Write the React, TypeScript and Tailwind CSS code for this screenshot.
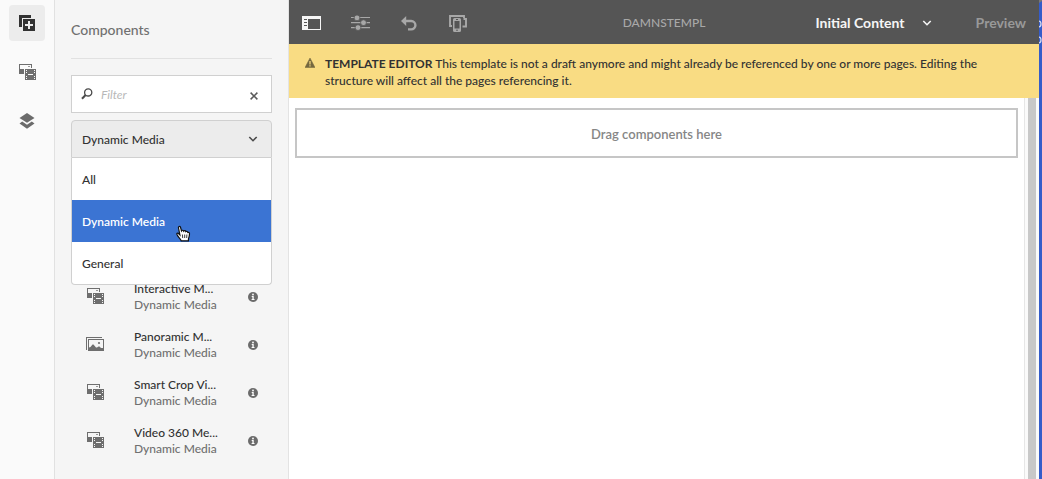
import React from 'react';

type IconProps = { className?: string };

function AddComponentIcon() {
  return (
    <svg className="h-4 w-4" viewBox="0 0 16 16" aria-hidden="true">
      <path fill="#323232" d="M0 0h12v3H3v9H0z" />
      <path fill="#323232" fillRule="evenodd" d="M4 4h12v12H4zM9 6v3H6v2h3v3h2v-3h3V9h-3V6z" />
    </svg>
  );
}

function MediaIcon({ className }: IconProps) {
  return (
    <svg className={className} viewBox="0 0 17 16" aria-hidden="true" shapeRendering="crispEdges">
      <path fill="currentColor" d="M0 0h13v4h-1V1H1v4h3l1 1v4H0z" />
      <path fill="currentColor" d="M9 2h2v1H9z" opacity=".7" />
      <path
        fill="currentColor"
        fillRule="evenodd"
        d="M6 5h11v11H6zM7 6v1h1V6zM7 8v1h1V8zM7 12v1h1v-1zM7 14v1h1v-1zM15 6v1h1V6zM15 8v1h1V8zM15 12v1h1v-1zM15 14v1h1v-1zM9 10v1h5v-1z"
      />
    </svg>
  );
}

function PanoramaIcon({ className }: IconProps) {
  return (
    <svg className={className} viewBox="0 0 18 15" aria-hidden="true">
      <path fill="currentColor" d="M0 0h16v1H1v12H0z" />
      <path
        fill="currentColor"
        fillRule="evenodd"
        d="M2 2h16v12H2zM3 3v7.500L4.500 10 6.500 7.500h1L10 10.500h1L12.500 9.500h1L15 11h2V3z"
      />
      <circle cx="13" cy="6" r="1.100" fill="currentColor" />
    </svg>
  );
}

function LayersIcon() {
  return (
    <svg className="h-4 w-4" viewBox="0 0 16 16" aria-hidden="true">
      <path fill="#6b6b6b" d="M8 0l7.500 4.900L8 9.800.5 4.900z" />
      <path fill="#6b6b6b" d="M3.200 8.600L8 11.800l4.800-3.200 2.700 2L8 15.800.5 10.600z" />
    </svg>
  );
}

function ChevronIcon({ className }: IconProps) {
  return (
    <svg className={className} viewBox="0 0 10 6" aria-hidden="true">
      <path d="M1.3 1L5 4.7 8.7 1" fill="none" stroke="currentColor" strokeWidth="1.6" />
    </svg>
  );
}

function InfoIcon() {
  return (
    <svg className="h-[10px] w-[10px]" viewBox="0 0 10 10" aria-hidden="true">
      <circle cx="5" cy="5" r="5" fill="#6b6b6b" />
      <circle cx="5" cy="2.5" r=".9" fill="#fff" />
      <path d="M3.7 4.1h2v3h.8v.9H3.6v-.9h.8V5h-.7z" fill="#fff" />
    </svg>
  );
}

function HandCursor({ className }: IconProps) {
  return (
    <svg className={className} viewBox="0 0 15 17" aria-hidden="true">
      <path
        d="M5.2 15.8c-.4-1.5-1.8-2.5-2.9-4.2C1.6 10.500.600 9.400.8 8.700c.3-.9 1.400-.8 2 .1l1.100 1.100L2.500 3C2.200 1.300 4 .8 4.500 2.300l1 3.600c.5-1 2-.8 2.200.2.6-.8 2-.5 2.100.5.800-.6 1.900-.1 2 .900.800-.3 1.700.2 1.700 1.200 0 2.500-.4 3.500-1 5l-.1 2.100z"
        fill="#fff"
        stroke="#111"
        strokeWidth="1.2"
      />
      <path d="M6.400 9.500l.3 3.500M8.700 9.500v3.500M10.900 9.500l-.2 3.500" stroke="#222" strokeWidth=".9" />
    </svg>
  );
}

const items = [
  { name: 'Interactive M...', panorama: false },
  { name: 'Panoramic M...', panorama: true },
  { name: 'Smart Crop Vi...', panorama: false },
  { name: 'Video 360 Me...', panorama: false },
];

const groups = ['All', 'Dynamic Media', 'General'];

function Rail() {
  return (
    <nav className="flex w-[55px] shrink-0 flex-col items-center gap-[13px] border-r border-[#e1e1e1] bg-[#fafafa] pt-[5px]">
      <button aria-label="Components" className="flex h-9 w-9 items-center justify-center rounded bg-[#ececec]">
        <AddComponentIcon />
      </button>
      <button aria-label="Assets" className="flex h-9 w-9 items-center justify-center">
        <MediaIcon className="h-4 w-[17px] text-[#6e6e6e]" />
      </button>
      <button aria-label="Content tree" className="flex h-9 w-9 items-center justify-center">
        <LayersIcon />
      </button>
    </nav>
  );
}

function ComponentPanel() {
  return (
    <aside className="flex w-[234px] shrink-0 flex-col border-r border-[#e3e3e3] bg-[#f5f5f5] px-4">
      <h2 className="flex h-[59px] items-center border-b border-[#e1e1e1] pt-[2px] text-sm font-medium text-[#707070]">
        Components
      </h2>
      <div className="mt-4 flex h-[38px] items-center border border-[#d0d0d0] bg-white px-[9px]">
        <svg className="h-3 w-3" viewBox="0 0 12 12" aria-hidden="true">
          <circle cx="7.200" cy="4.400" r="3.600" fill="none" stroke="#4b4b4b" strokeWidth="1.300" />
          <path d="M4.600 7L1 10.800" stroke="#4b4b4b" strokeWidth="2" />
        </svg>
        <input
          aria-label="Filter"
          placeholder="Filter"
          className="ml-2 w-0 flex-1 bg-transparent pt-[2px] text-xs outline-none placeholder:text-[#b8b8b8] placeholder:italic"
        />
        <button aria-label="Clear filter" className="flex h-4 w-4 items-center justify-center pt-1">
          <svg className="h-2 w-2" viewBox="0 0 8 8" aria-hidden="true">
            <path d="M.6.600l6.800 6.800M7.400.600L.6 7.400" stroke="#5a5a5a" strokeWidth="1.500" />
          </svg>
        </button>
      </div>
      <div className="relative mt-[7px]">
        <div className="relative">
          <select
            aria-label="Component group"
            defaultValue="Dynamic Media"
            className="block h-[38px] w-full appearance-none rounded-t border border-[#d0d0d0] bg-[#ececec] px-[10px] pt-[2px] text-xs font-medium text-[#323232] outline-none"
          >
            {groups.map((g) => (
              <option key={g}>{g}</option>
            ))}
          </select>
          <ChevronIcon className="pointer-events-none absolute top-4 right-[14px] h-[6px] w-[10px] text-[#4b4b4b]" />
        </div>
        <ul
          role="listbox"
          aria-label="Component groups"
          className="absolute top-full right-0 left-0 z-10 rounded-b border border-t-0 border-[#d0d0d0] bg-white text-xs font-medium text-[#323232]"
        >
          {groups.map((g) =>
            g === 'Dynamic Media' ? (
              <li
                key={g}
                role="option"
                aria-selected="true"
                className="relative flex h-[42px] items-center bg-[#3b74d3] px-[10px] pt-[2px] font-semibold text-white"
              >
                {g}
                <HandCursor className="absolute top-[25px] left-[104px] h-[17px] w-[15px]" />
              </li>
            ) : (
              <li key={g} role="option" aria-selected="false" className="flex h-[42px] items-center px-[10px] pt-[2px]">
                {g}
              </li>
            ),
          )}
        </ul>
      </div>
      <ul className="mt-[115px]">
        {items.map((item) => (
          <li key={item.name} className="flex h-12 items-center pr-[14px]">
            <span className="flex w-[63px] shrink-0 pb-[2px] pl-[15px]">
              {item.panorama ? (
                <PanoramaIcon className="h-[15px] w-[18px] text-[#6e6e6e]" />
              ) : (
                <MediaIcon className="ml-px h-4 w-[17px] text-[#6e6e6e]" />
              )}
            </span>
            <span className="flex flex-1 flex-col text-xs leading-4 font-medium whitespace-nowrap">
              <span className="text-[#323232]">{item.name}</span>
              <span className="text-[#707070]">Dynamic Media</span>
            </span>
            <button aria-label={`About ${item.name}`}>
              <InfoIcon />
            </button>
          </li>
        ))}
      </ul>
    </aside>
  );
}

function Toolbar() {
  return (
    <header className="flex h-11 items-center bg-[#555555] pt-[2px] pr-[13px] pl-[13px] text-sm">
      <div className="flex flex-1 items-center text-[#a8a8a8]">
        <button aria-label="Toggle side panel" className="w-[49px]">
          <svg className="h-[14px] w-[19px]" viewBox="0 0 19 14" aria-hidden="true" shapeRendering="crispEdges">
            <path fill="#f5f5f5" fillRule="evenodd" d="M0 0h19v14H0zM6 3v10h12V3zM2 3v1h3V3zM2 6v1h3V6zM2 9v1h3V9z" />
          </svg>
        </button>
        <button aria-label="Page information" className="w-[50px]">
          <svg className="h-4 w-[19px]" viewBox="0 0 19 16" aria-hidden="true" fill="currentColor">
            <path d="M0 2h19v1H0zM0 7h19v1.200H0zM0 12h19v1.200H0z" />
            <g stroke="#555555" strokeWidth=".8">
              <circle cx="6" cy="2.900" r="2.900" />
              <circle cx="12.500" cy="7.700" r="2.900" />
              <circle cx="7" cy="12.600" r="2.900" />
            </g>
          </svg>
        </button>
        <button aria-label="Undo" className="w-[48px]">
          <svg className="h-[15px] w-[17px]" viewBox="0 0 17 15" aria-hidden="true">
            <path d="M0 5L5.200 0v10z" fill="currentColor" />
            <path d="M4 5h6.200a4.200 4.200 0 0 1 0 8.400H7" fill="none" stroke="currentColor" strokeWidth="2.400" />
          </svg>
        </button>
        <button aria-label="Emulator">
          <svg className="h-[17px] w-[18px]" viewBox="0 0 18 17" aria-hidden="true">
            <path d="M3 11H1V1h14v2M14.500 4H17v7.500h-3.500" fill="none" stroke="currentColor" strokeWidth="1.900" />
            <path
              fill="currentColor"
              fillRule="evenodd"
              d="M5.500 3h5Q12 3 12 4.500v11q0 1.500-1.500 1.500h-5Q4 17 4 15.500v-11Q4 3 5.500 3zM5.500 6v7.500h5V6z"
            />
            <path d="M7 4.500h2" stroke="#555555" />
            <circle cx="8" cy="15.200" r=".8" fill="#555555" />
          </svg>
        </button>
      </div>
      <h1 className="text-xs font-medium text-[#a8a8a8]">DAMNSTEMPL</h1>
      <div className="flex flex-1 items-center justify-end">
        <button className="flex items-center gap-[17px] font-bold text-[#f5f5f5]">
          Initial Content
          <ChevronIcon className="h-[6px] w-[10px]" />
        </button>
        <button className="ml-11 font-bold text-[#999999]">Preview</button>
      </div>
    </header>
  );
}

export default function App() {
  return (
    <div className="flex min-h-screen bg-white font-['Lato','Noto_Sans',sans-serif]">
      <Rail />
      <ComponentPanel />
      <main className="flex min-w-0 flex-1 flex-col">
        <Toolbar />
        <div role="status" className="flex bg-[#f9dc83] px-4 pt-[11px] pb-[9px] text-xs leading-[17px] text-[#323232]">
          <svg className="mt-[3px] mr-[10px] h-[10px] w-[10px] shrink-0" viewBox="0 0 10 10" aria-hidden="true">
            <path d="M5 0L10 9.500H0z" fill="#75683f" stroke="#75683f" strokeWidth=".5" strokeLinejoin="round" />
            <path d="M5 3v3.500M5 7.300v1.200" stroke="#f9dc83" strokeWidth="1.200" />
          </svg>
          <p className="max-w-[680px] font-medium">
            <strong className="font-bold">TEMPLATE EDITOR</strong> This template is not a draft anymore and might
            already be referenced by one or more pages. Editing the structure will affect all the pages referencing it.
          </p>
        </div>
        <div className="flex flex-1">
          <section className="flex-1 px-[6px] pt-[10px]">
            <div className="flex h-[50px] items-center justify-center border-2 border-[#c6c6c6] pt-1 text-[13px] font-semibold text-[#868686]">
              Drag components here
            </div>
          </section>
          <div className="w-[15px] border-l border-[#e6e6e6] bg-[#fafafa] pr-[3px] pl-[3px]">
            <div className="h-full bg-[#c8c8c8]" />
          </div>
        </div>
      </main>
      <div className="w-[3px] shrink-0 bg-[#355cc9]">
        <svg className="block h-12 w-[3px]" viewBox="0 0 3 48" aria-hidden="true">
          <path d="M0 0h3v1L0 3z" fill="#777" />
          <g fill="none" stroke="#d5dcf2" strokeWidth="1.300">
            <path d="M-.5 21Q2 21 2 24t-2.500 3M-.5 37Q2 37 2 40t-2.500 3" />
          </g>
        </svg>
      </div>
    </div>
  );
}
